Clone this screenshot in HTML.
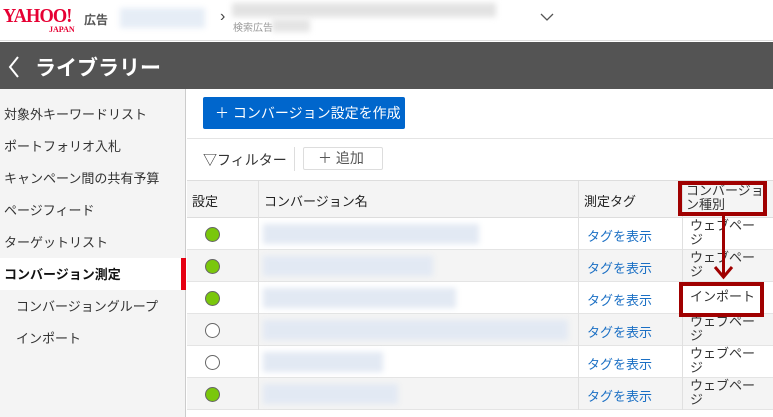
<!DOCTYPE html>
<html><head><meta charset="utf-8"><style>
*{margin:0;padding:0;box-sizing:border-box}
body{width:773px;height:417px;overflow:hidden;background:#fff;font-family:"Liberation Sans","Noto Sans CJK JP",sans-serif;color:#222;position:relative;font-size:13px}
.a{position:absolute}
.blur{filter:blur(3px);position:absolute}
.side div{position:absolute;left:4px;font-size:13px;color:#333}
.row{position:absolute;left:187px;width:586px;height:32px;border-bottom:1px solid #e4e4e4}
.g{background:#f4f4f4}
.dot{position:absolute;left:18px;top:9px;width:15px;height:15px;border-radius:50%;border:1px solid #666;background:#7ac70c}
.dot.o{background:#fff}
.tag{position:absolute;left:400px;top:8px;color:#1a6fc4;font-size:13px}
.typ{position:absolute;left:503px;top:1px;font-size:13px;line-height:14px;white-space:nowrap;color:#333}
.nm{position:absolute;left:76px;top:6px;height:20px;background:#e2e9f3;filter:blur(3px)}
</style></head><body>
<div class="a" style="left:0;top:0;width:773px;height:41px;border-bottom:1px solid #ddd"></div>
<div class="a" style="left:3px;top:5px;font-family:'Liberation Serif',serif;font-weight:bold;color:#e60033;font-size:20px;letter-spacing:-1px;transform:scaleX(0.92);transform-origin:left">YAHOO!</div>
<div class="a" style="left:49px;top:25px;font-family:'Liberation Serif',serif;font-weight:bold;color:#e60033;font-size:8px">JAPAN</div>
<div class="a" style="left:84px;top:11px;font-size:12px;color:#555;font-weight:bold">広告</div>
<div class="blur" style="left:120px;top:8px;width:85px;height:20px;background:#e6edf6"></div>
<div class="a" style="left:220px;top:8px;font-size:16px;color:#444">›</div>
<div class="blur" style="left:232px;top:3px;width:264px;height:14px;background:#e2e2e2"></div>
<div class="a" style="left:233px;top:19px;font-size:10px;color:#999">検索広告</div>
<div class="blur" style="left:272px;top:19px;width:38px;height:13px;background:#e4e4e4"></div>
<svg class="a" style="left:540px;top:12px" width="14" height="10"><path d="M1 2l6 6 6-6" fill="none" stroke="#555" stroke-width="1.3"/></svg>
<div class="a" style="left:0;top:42px;width:773px;height:47px;background:#545454"></div>
<svg class="a" style="left:8px;top:56px" width="12" height="22"><path d="M10 1L2 11l8 10" fill="none" stroke="#fff" stroke-width="2"/></svg>
<div class="a" style="left:35px;top:52px;font-size:21px;color:#fff;font-weight:bold">ライブラリー</div>
<div class="a side" style="left:0;top:89px;width:186px;height:328px;background:#f4f4f4;border-right:1px solid #ccc">
<div style="top:15px">対象外キーワードリスト</div>
<div style="top:47px">ポートフォリオ入札</div>
<div style="top:79px">キャンペーン間の共有予算</div>
<div style="top:111px">ページフィード</div>
<div style="top:143px">ターゲットリスト</div>
<div style="top:169px;left:0;width:186px;height:32px;background:#fff"></div>
<div style="top:175px;font-weight:bold;color:#111">コンバージョン測定</div>
<div style="top:169px;left:181px;width:5px;height:32px;background:#e60012"></div>
<div style="top:207px;left:16px">コンバージョングループ</div>
<div style="top:239px;left:16px">インポート</div>
</div>
<div class="a" style="left:203px;top:97px;width:202px;height:32px;background:#0066cc;border-radius:2px;color:#fff;font-size:14px;line-height:32px;padding-left:12px">＋ コンバージョン設定を作成</div>
<div class="a" style="left:187px;top:138px;width:586px;height:1px;background:#e4e4e4"></div>
<div class="a" style="left:203px;top:150px;font-size:14px;color:#333">▽フィルター</div>
<div class="a" style="left:294px;top:147px;width:1px;height:24px;background:#ddd"></div>
<div class="a" style="left:303px;top:147px;width:80px;height:23px;border:1px solid #ddd;border-radius:2px;font-size:14px;color:#555;padding-left:14px;line-height:21px">＋ 追加</div>
<div class="a" style="left:187px;top:180px;width:586px;height:38px;background:#f4f4f4;border-top:1px solid #ddd;border-bottom:1px solid #ddd"></div>
<div class="a" style="left:192px;top:191px">設定</div>
<div class="a" style="left:264px;top:191px">コンバージョン名</div>
<div class="a" style="left:584px;top:191px">測定タグ</div>
<div class="a" style="left:686px;top:184px;line-height:14px;color:#333;white-space:nowrap">コンバージョ<br>ン種別</div>
<div class="row" style="top:218px"><div class="dot"></div><div class="nm" style="width:216px"></div><div class="tag">タグを表示</div><div class="typ">ウェブペー<br>ジ</div></div>
<div class="row g" style="top:250px"><div class="dot"></div><div class="nm" style="width:170px"></div><div class="tag">タグを表示</div><div class="typ">ウェブペー<br>ジ</div></div>
<div class="row" style="top:282px"><div class="dot"></div><div class="nm" style="width:193px"></div><div class="tag">タグを表示</div><div class="typ" style="top:8px">インポート</div></div>
<div class="row g" style="top:314px"><div class="dot o"></div><div class="nm" style="width:305px"></div><div class="tag">タグを表示</div><div class="typ">ウェブペー<br>ジ</div></div>
<div class="row" style="top:346px"><div class="dot o"></div><div class="nm" style="width:120px"></div><div class="tag">タグを表示</div><div class="typ">ウェブペー<br>ジ</div></div>
<div class="row g" style="top:378px"><div class="dot"></div><div class="nm" style="width:135px"></div><div class="tag">タグを表示</div><div class="typ">ウェブペー<br>ジ</div></div>
<div class="a" style="left:258px;top:181px;width:1px;height:229px;background:#e0e0e0"></div>
<div class="a" style="left:578px;top:181px;width:1px;height:229px;background:#e0e0e0"></div>
<div class="a" style="left:682px;top:181px;width:1px;height:229px;background:#e0e0e0"></div>
<div class="a" style="left:678px;top:181px;width:89px;height:35px;border:4px solid #a00000"></div>
<div class="a" style="left:679px;top:282px;width:85px;height:35px;border:4px solid #a00000"></div>
<div class="a" style="left:722px;top:216px;width:3px;height:60px;background:#a00000"></div>
<svg class="a" style="left:713px;top:265px" width="21" height="15"><path d="M2 2l8.5 10L19 2" fill="none" stroke="#a00000" stroke-width="3"/></svg>
</body></html>
